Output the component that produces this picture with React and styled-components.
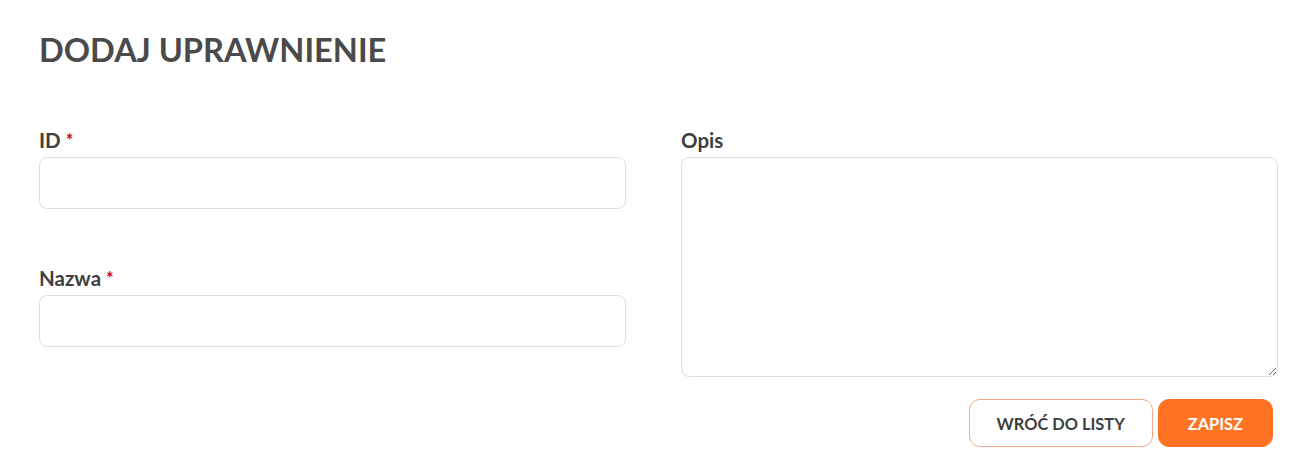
import React from "react";
import styled, { createGlobalStyle } from "styled-components";

const GlobalStyle = createGlobalStyle`
  body {
    margin: 0;
    background: #fff;
    font-family: Lato, "Noto Sans", sans-serif;
    color: #444;
  }
  * { box-sizing: border-box; }
`;

const Page = styled.div`
  padding: 28px 18px 0 39px;
`;

const Title = styled.h1`
  margin: 0;
  font-size: 32.6px;
  line-height: 44px;
  font-weight: 700;
  color: #4a4a4a;
`;

const Form = styled.form`
  display: grid;
  grid-template-columns: 587px 597px;
  column-gap: 55px;
  margin-top: 56px;
`;

const Column = styled.div`
  display: flex;
  flex-direction: column;
  gap: 57px;
`;

const Field = styled.div`
  display: flex;
  flex-direction: column;
`;

const Label = styled.label`
  font-size: 20.5px;
  line-height: 24px;
  font-weight: 700;
  color: #3f3f3f;
  margin: 0 0 5px 0;
`;

const Star = styled.span`
  color: #d0021b;
  font-size: 18px;
  margin-left: 5px;
  vertical-align: top;
`;

const Input = styled.input`
  height: 52px;
  border: 1px solid #dadde6;
  border-radius: 8px;
  padding: 0 14px;
  font: inherit;
  outline: none;
`;

const TextArea = styled.textarea`
  height: 220px;
  border: 1px solid #dadde6;
  border-radius: 8px;
  padding: 12px 14px;
  font: inherit;
  outline: none;
`;

const Actions = styled.div`
  display: flex;
  justify-content: flex-end;
  gap: 5px;
  padding-right: 5px;
  margin-top: 22px;
`;

const Button = styled.button`
  height: 48px;
  padding: 0 ${(p) => (p.$primary ? "29px" : "27px")};
  border-radius: 11px;
  font-family: Lato, "Noto Sans", sans-serif;
  font-size: 16.4px;
  font-weight: 700;
  cursor: pointer;
  border: 1px solid ${(p) => (p.$primary ? "#ff7322" : "#f6a68b")};
  background: ${(p) => (p.$primary ? "#ff7322" : "#fff")};
  color: ${(p) => (p.$primary ? "#fff" : "#3f3f3f")};
`;

export default function App() {
  return (
    <Page>
      <GlobalStyle />
      <Title>DODAJ UPRAWNIENIE</Title>
      <Form onSubmit={(e) => e.preventDefault()}>
        <Column>
          <Field>
            <Label>
              ID<Star>*</Star>
            </Label>
            <Input type="text" />
          </Field>
          <Field>
            <Label>
              Nazwa<Star>*</Star>
            </Label>
            <Input type="text" />
          </Field>
        </Column>
        <Column>
          <Field>
            <Label>Opis</Label>
            <TextArea />
          </Field>
        </Column>
      </Form>
      <Actions>
        <Button type="button">WRÓĆ DO LISTY</Button>
        <Button type="submit" $primary>
          ZAPISZ
        </Button>
      </Actions>
    </Page>
  );
}
